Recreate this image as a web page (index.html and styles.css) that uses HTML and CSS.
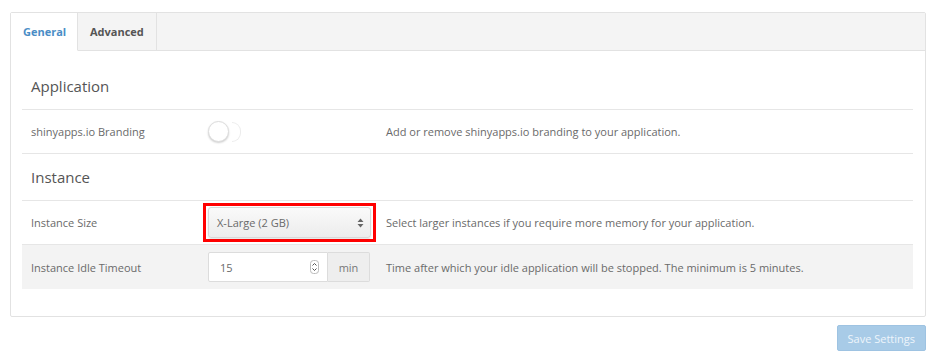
FILE: index.html
```html
<!DOCTYPE html>
<html lang="en">
<head>
    <meta charset="UTF-8">
    <title>Application Settings</title>
    <link rel="stylesheet" href="styles.css">
</head>
<body>
    <div class="panel">
        <ul class="tabs">
            <li class="tab active">General</li>
            <li class="tab">Advanced</li>
            <li class="tab-fill"></li>
        </ul>
        <div class="panel-body">
            <h3 class="section-title">Application</h3>
            <div class="row">
                <div class="label">shinyapps.io Branding</div>
                <div class="control">
                    <span class="toggle"><span class="knob"></span><span class="ghost"></span></span>
                </div>
                <div class="help">Add or remove shinyapps.io branding to your application.</div>
            </div>
            <h3 class="section-title compact">Instance</h3>
            <div class="row">
                <div class="label">Instance Size</div>
                <div class="control">
                    <div class="highlight">
                        <div class="select">
                            <span>X-Large (2 GB)</span>
                            <svg width="7" height="10" viewBox="0 0 7 10"><path d="M3.5 0.5 L6.5 4 L0.5 4 Z M0.5 6 L6.5 6 L3.5 9.5 Z" fill="#666"/></svg>
                        </div>
                    </div>
                </div>
                <div class="help">Select larger instances if you require more memory for your application.</div>
            </div>
            <div class="row shaded">
                <div class="label">Instance Idle Timeout</div>
                <div class="control">
                    <div class="input-group">
                        <div class="number">
                            <span>15</span>
                            <svg width="9" height="14" viewBox="0 0 9 14"><rect x="0.5" y="0.5" width="8" height="13" rx="3" fill="#fff" stroke="#bbb"/><path d="M2.5 5.5 L4.5 3.5 L6.5 5.5 M2.5 8.5 L4.5 10.5 L6.5 8.5" fill="none" stroke="#555" stroke-width="1"/></svg>
                        </div>
                        <span class="addon">min</span>
                    </div>
                </div>
                <div class="help">Time after which your idle application will be stopped. The minimum is 5 minutes.</div>
            </div>
        </div>
    </div>
    <div class="actions">
        <button class="btn-save">Save Settings</button>
    </div>
</body>
</html>
```

FILE: styles.css
```css
* {
    box-sizing: border-box;
    margin: 0;
    padding: 0;
    font-family: 'Open Sans', 'Liberation Sans', sans-serif;
}

body {
    background-color: #fff;
    padding: 12px 12px 0 10px;
    color: #6a6a6a;
}

.panel {
    width: 916px;
    border: 1px solid #e2e2e2;
    border-radius: 2px;
}

.tabs {
    display: flex;
    list-style: none;
    height: 38px;
    background-color: #f4f4f4;
}

.tab {
    font-size: 11px;
    font-weight: bold;
    color: #555;
    padding: 0 12px;
    line-height: 38px;
    border-right: 1px solid #e2e2e2;
    border-bottom: 1px solid #e2e2e2;
}

.tab:first-child {
    width: 67px;
}

.tab:nth-child(2) {
    width: 79px;
}

.tab.active {
    background-color: #fff;
    color: #4a8dc6;
    border-bottom-color: #fff;
}

.tab-fill {
    flex: 1;
    border-bottom: 1px solid #e2e2e2;
}

.panel-body {
    padding: 0 12px 27px 11px;
}

.section-title {
    font-size: 15px;
    font-weight: normal;
    color: #555;
    padding: 25px 0 0 9px;
    height: 59px;
    border-bottom: 1px solid #e6e6e6;
}

.section-title.compact {
    padding-top: 13px;
    height: 47px;
}

.row {
    display: flex;
    align-items: center;
    height: 44px;
    border-bottom: 1px solid #e6e6e6;
    font-size: 11px;
}

.row.shaded {
    background-color: #f3f3f3;
    border-bottom: none;
}

.label {
    width: 186px;
    padding-left: 9px;
}

.control {
    width: 178px;
    display: flex;
    align-items: center;
}

.help {
    flex: 1;
}

.toggle {
    display: flex;
    align-items: center;
}

.knob {
    width: 21px;
    height: 21px;
    border-radius: 50%;
    background-color: #fff;
    border: 1px solid #ddd;
    box-shadow: 0 1px 2px rgba(0, 0, 0, 0.2);
}

.ghost {
    width: 9px;
    height: 20px;
    margin-left: 3px;
    border: 1px solid #ececec;
    border-left: none;
    border-radius: 0 10px 10px 0;
}

.highlight {
    margin-left: -5px;
    border: 3px solid #ff0000;
    padding: 1px 2px;
}

.select {
    width: 163px;
    height: 31px;
    display: flex;
    align-items: center;
    justify-content: space-between;
    padding: 0 6px 0 8px;
    border: 1px solid #d8d8d8;
    border-radius: 3px;
    background: linear-gradient(#fafafa, #ececec);
    box-shadow: 0 1px 2px rgba(0, 0, 0, 0.12);
}

.input-group {
    display: flex;
    height: 30px;
}

.number {
    width: 120px;
    display: flex;
    align-items: center;
    justify-content: space-between;
    padding: 0 8px 0 11px;
    background-color: #fff;
    border: 1px solid #dcdcdc;
    border-radius: 2px 0 0 2px;
}

.addon {
    width: 42px;
    display: flex;
    align-items: center;
    justify-content: center;
    background-color: #eee;
    border: 1px solid #dcdcdc;
    border-left: none;
    border-radius: 0 2px 2px 0;
    color: #777;
}

.actions {
    width: 916px;
    display: flex;
    justify-content: flex-end;
    padding-top: 8px;
}

.btn-save {
    background-color: #a8cbe7;
    color: #eef5fb;
    border: 1px solid #9ec3e2;
    border-radius: 2px;
    padding: 0 10px;
    height: 26px;
    font-size: 11px;
}
```
